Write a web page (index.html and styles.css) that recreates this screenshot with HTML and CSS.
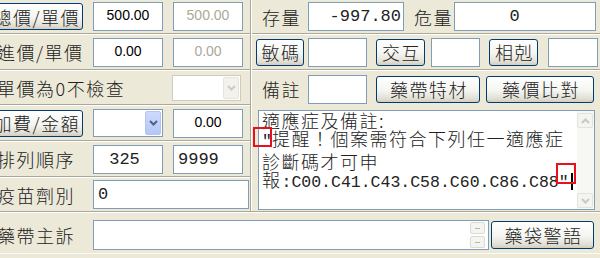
FILE: index.html
```html
<!DOCTYPE html>
<html lang="zh-Hant">
<head>
    <meta charset="UTF-8">
    <title>藥品資料</title>
    <link rel="stylesheet" href="styles.css">
</head>
<body>
    <div class="top">
        <div class="left">
            <div class="row h34">
                <button class="btn btn-cut">總價/單價</button>
                <input class="field" value="500.00">
                <input class="field" value="500.00" disabled>
            </div>
            <div class="row h35">
                <span class="lbl">進價/單價</span>
                <input class="field" value="0.00">
                <input class="field" value="0.00" disabled>
            </div>
            <div class="row h34">
                <span class="lbl lbl-wide">單價為0不檢查</span>
                <div class="combo off">
                    <span class="combo-arrow">
                        <svg width="9" height="6" viewBox="0 0 9 6"><path d="M1 1l3.5 3.5L8 1" fill="none" stroke="#cfcdc2" stroke-width="2"/></svg>
                    </span>
                </div>
            </div>
            <div class="row h35">
                <button class="btn btn-cut">加費/金額</button>
                <div class="combo">
                    <span class="combo-arrow">
                        <svg width="9" height="6" viewBox="0 0 9 6"><path d="M1 1l3.5 3.5L8 1" fill="none" stroke="#4d6185" stroke-width="2"/></svg>
                    </span>
                </div>
                <input class="field after-combo" value="0.00">
            </div>
            <div class="row h35">
                <span class="lbl">排列順序</span>
                <input class="field mono mid" value="325">
                <input class="field mono start" value="9999">
            </div>
            <div class="row h33">
                <span class="lbl">疫苗劑別</span>
                <input class="field mono start wide" value="0">
            </div>
        </div>

        <div class="right">
            <div class="row h34 pad">
                <span class="rlbl">存量</span>
                <input class="field mono end stock" value="-997.80">
                <span class="rlbl rlbl-2">危量</span>
                <input class="field mono mid danger" value="0">
            </div>
            <div class="row h35 pad-sm">
                <button class="btn btn-sm first">敏碼</button>
                <input class="field box-a">
                <button class="btn btn-sm gap-a">交互</button>
                <input class="field box-b">
                <button class="btn btn-sm gap-b">相剋</button>
                <input class="field box-c">
            </div>
            <div class="row last">
                <div class="note-bar pad">
                    <span class="rlbl">備註</span>
                    <input class="field box-a">
                    <button class="btn btn-md">藥帶特材</button>
                    <button class="btn btn-lg">藥價比對</button>
                </div>
                <div class="notes">
                    <div class="notes-text">
                        適應症及備註:<br>
                        <span class="code">"</span>提醒！個案需符合下列任一適應症<br>
                        診斷碼才可申<br>
                        報<span class="code">:C00.C41.C43.C58.C60.C86.C88"</span><span class="caret"></span>
                        <span class="mark mark-1"></span>
                        <span class="mark mark-2"></span>
                    </div>
                    <div class="vscroll">
                        <span class="sbtn">
                            <svg width="9" height="6" viewBox="0 0 9 6"><path d="M1 5l3.5-3.5L8 5" fill="none" stroke="#cbc9be" stroke-width="2"/></svg>
                        </span>
                        <span class="sbtn">
                            <svg width="9" height="6" viewBox="0 0 9 6"><path d="M1 1l3.5 3.5L8 1" fill="none" stroke="#cbc9be" stroke-width="2"/></svg>
                        </span>
                    </div>
                </div>
            </div>
        </div>
    </div>

    <div class="bottom">
        <span class="lbl">藥帶主訴</span>
        <div class="memo">
            <div class="spin">
                <span class="spin-btn"><i></i></span>
                <span class="spin-btn"><i></i></span>
            </div>
        </div>
        <button class="btn warn">藥袋警語</button>
    </div>
</body>
</html>
```

FILE: styles.css
```css
* {
    margin: 0;
    padding: 0;
    box-sizing: border-box;
}

body {
    width: 600px;
    height: 258px;
    overflow: hidden;
    background-color: #ece9d8;
    font-family: "Noto Sans CJK TC", sans-serif;
    font-size: 18px;
    font-weight: 300;
    line-height: 20px;
    letter-spacing: 1.5px;
    color: #222;
}

/* panels */
.top {
    display: flex;
    border-bottom: 1px solid #aca899;
}

.left {
    width: 251px;
    flex: none;
    overflow: hidden;
    border-right: 1px solid #aca899;
}

.right {
    flex: 1;
    min-width: 0;
    border-left: 1px solid #fff;
}

.row {
    display: flex;
    align-items: center;
    border-bottom: 1px solid #aca899;
    box-shadow: 0 1px 0 #fff;
    margin-bottom: 1px;
}

.row:last-child {
    border-bottom: none;
    box-shadow: none;
    margin-bottom: 0;
}

/* heights include the bottom rule */
.h33 { height: 33px; }
.h34 { height: 34px; }
.h35 { height: 35px; }

.row.last {
    display: block;
}

.pad { padding-left: 10px; }
.pad-sm { padding-left: 4px; }

/* labels */
.lbl {
    width: 96px;
    flex: none;
    margin-left: -3px;
    white-space: nowrap;
}

.lbl-wide {
    width: auto;
}

.rlbl {
    width: 46px;
    flex: none;
    white-space: nowrap;
}

.rlbl-2 {
    width: 40px;
    margin-left: 10px;
}

/* inputs */
.field {
    width: 70px;
    height: 29px;
    flex: none;
    border: 1px solid #7f9db9;
    background-color: #fff;
    font-family: "Liberation Sans", sans-serif;
    font-size: 14px;
    font-weight: 400;
    letter-spacing: 0;
    color: #000;
    text-align: center;
    padding: 0 3px 3px;
    outline: none;
}

.field + .field,
.after-combo {
    margin-left: 10px;
}

.field:disabled {
    background-color: #fff;
    color: #aca899;
}

.mono {
    font-family: "Liberation Mono", monospace;
    font-size: 17px;
    color: #222;
    padding-bottom: 0;
}

.mid { text-align: center; padding-right: 10px; }
.start { text-align: left; padding-left: 4px; }
.end { text-align: right; padding-right: 2px; }

.wide { width: 156px; }
.stock { width: 96px; }
.danger { width: 142px; padding-right: 24px; }

.box-a { width: 59px; }
.box-b { width: 49px; margin-left: 3px; }
.box-c { width: 50px; margin-left: 10px; }

/* combos */
.combo {
    width: 70px;
    height: 28px;
    flex: none;
    display: flex;
    justify-content: flex-end;
    padding: 1px;
    border: 1px solid #7f9db9;
    background-color: #fff;
}

.combo-arrow {
    width: 16px;
    display: flex;
    align-items: center;
    justify-content: center;
    border: 1px solid #b3c5ef;
    border-radius: 2px;
    background: linear-gradient(#cddafc, #b4c8f6);
}

.combo.off {
    width: 69px;
    height: 26px;
    margin-left: auto;
    margin-right: 9px;
    border-color: #cfcbbd;
}

.combo.off .combo-arrow {
    border-color: #e6e4dc;
    background: #f3f2ec;
}

/* buttons */
.btn {
    height: 27px;
    flex: none;
    border: 1px solid #003c74;
    border-radius: 3px;
    background: linear-gradient(#ffffff, #f4f4f0 55%, #e3e0d6 85%, #d2cdc0);
    font: inherit;
    letter-spacing: 1.5px;
    line-height: 20px;
    color: #222;
    text-align: center;
    white-space: nowrap;
    padding: 0 0 0 2px;
}

.btn-cut {
    width: 95px;
    margin-left: -12px;
    margin-right: 10px;
    text-align: right;
    padding-right: 2px;
}

.btn-sm {
    width: 48px;
}

.first {
    margin-right: 4px;
}

.gap-a { width: 49px; margin-left: 9px; margin-right: 3px; }
.gap-b { width: 49px; margin-left: 9px; }

.btn-md {
    width: 104px;
    margin-left: 9px;
}

.btn-lg {
    width: 108px;
    margin-left: 6px;
}

/* notes box */
.note-bar {
    display: flex;
    align-items: center;
    height: 36px;
}

.notes {
    display: flex;
    width: 337px;
    height: 100px;
    margin: 3px 0 1px 6px;
    border: 1px solid #7f9db9;
    background-color: #fff;
}

.notes-text {
    flex: 1;
    position: relative;
    padding: 0 3px;
    line-height: 18.3px;
    white-space: nowrap;
}

.code {
    font-family: "Liberation Mono", monospace;
    font-size: 16.5px;
    font-weight: 400;
    letter-spacing: 0;
}

.caret {
    display: inline-block;
    width: 2px;
    height: 17px;
    margin-left: 2px;
    vertical-align: -3px;
    background-color: #000;
}

.mark {
    position: absolute;
    border: 2px solid #e8101a;
}

.mark-1 { left: -6px; top: 16px; width: 19px; height: 20px; }
.mark-2 { left: 297px; top: 52px; width: 20px; height: 21px; }

.vscroll {
    width: 17px;
    flex: none;
    display: flex;
    flex-direction: column;
    justify-content: space-between;
    padding: 2px 1px 1px 0;
    background-color: #f7f7f4;
}

.sbtn {
    height: 15px;
    display: flex;
    align-items: center;
    justify-content: center;
    border: 1px solid #e3e2dc;
    border-radius: 2px;
    background-color: #f4f4f0;
}

/* bottom row */
.bottom {
    display: flex;
    align-items: center;
    height: 42px;
    padding-top: 4px;
    border-top: 1px solid #fff;
    border-bottom: 1px solid #fbfaf5;
}

.memo {
    width: 396px;
    height: 30px;
    display: flex;
    justify-content: flex-end;
    align-items: center;
    border: 1px solid #7f9db9;
    background-color: #fff;
}

.spin {
    display: flex;
    flex-direction: column;
    gap: 2px;
    margin-right: 3px;
}

.spin-btn {
    width: 15px;
    height: 12px;
    display: flex;
    align-items: center;
    justify-content: center;
    border: 1px solid #dcdbd3;
    border-radius: 2px;
    background-color: #f4f4f1;
}

.spin-btn i {
    width: 5px;
    height: 1px;
    background-color: #b8b6ac;
}

.warn {
    width: 103px;
    height: 28px;
    margin-left: 2px;
}
```
